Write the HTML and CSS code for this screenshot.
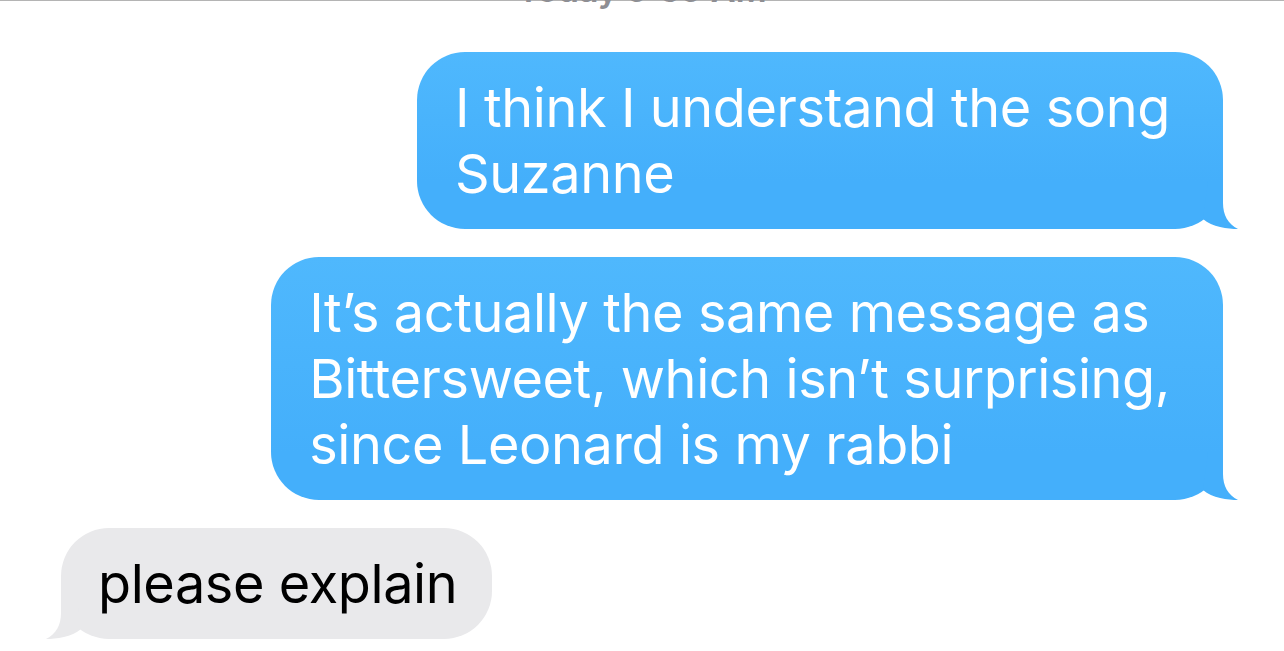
FILE: index.html
```html
<!DOCTYPE html>
<html lang="en">
<head>
  <meta charset="UTF-8">
  <title>Messages</title>
  <link rel="stylesheet" href="styles.css">
</head>
<body>
  <div class="thread">
    <div class="stamp">Today 9:59 AM</div>

    <div class="row sent">
      <div class="bubble">
        I think I understand the song<br>Suzanne
        <svg class="tail" viewBox="0 0 40 48" width="40" height="48"><path d="M8 0 L23 0 L23 22 C23 34 28 43 38 48 C28 48 12 46 3 38 Z"/></svg>
      </div>
    </div>

    <div class="row sent">
      <div class="bubble">
        It’s actually the same message as<br>Bittersweet, which isn’t surprising,<br>since Leonard is my rabbi
        <svg class="tail" viewBox="0 0 40 48" width="40" height="48"><path d="M8 0 L23 0 L23 22 C23 34 28 43 38 48 C28 48 12 46 3 38 Z"/></svg>
      </div>
    </div>

    <div class="row received">
      <div class="bubble">
        please explain
        <svg class="tail" viewBox="0 0 40 48" width="40" height="48"><path d="M32 0 L17 0 L17 22 C17 34 12 43 2 48 C12 48 28 46 37 38 Z"/></svg>
      </div>
    </div>
  </div>
</body>
</html>
```

FILE: styles.css
```css
body {
  margin: 0;
  background: #fff;
  font-family: Inter, "Noto Sans", sans-serif;
  overflow: hidden;
}
.thread {
  border-top: 1px solid #b4b4b4;
  padding: 0 61px;
  display: flex;
  flex-direction: column;
  gap: 28px;
}
.stamp {
  margin-top: -31px;
  margin-bottom: 14px;
  text-align: center;
  color: #8e8e93;
  font-size: 34px;
  font-weight: 600;
  line-height: 40px;
  height: 40px;
}
.row {
  display: flex;
}
.row.sent {
  justify-content: flex-end;
}
.bubble {
  position: relative;
  font-size: 54px;
  line-height: 66px;
  border-radius: 48px;
  letter-spacing: -0.4px;
}
.sent .bubble {
  color: #fff;
  background: linear-gradient(#4fb8fd, #44affb calc(100% - 48px));
  padding: 23px 53px 22px 38px;
}
.sent .tail {
  position: absolute;
  right: -17px;
  bottom: 0;
  fill: #44affb;
}
.received .bubble {
  color: #000;
  background: #e9e9eb;
  padding: 23px 35px 22px 37px;
}
.received .tail {
  position: absolute;
  left: -17px;
  bottom: 0;
  fill: #e9e9eb;
}
```
